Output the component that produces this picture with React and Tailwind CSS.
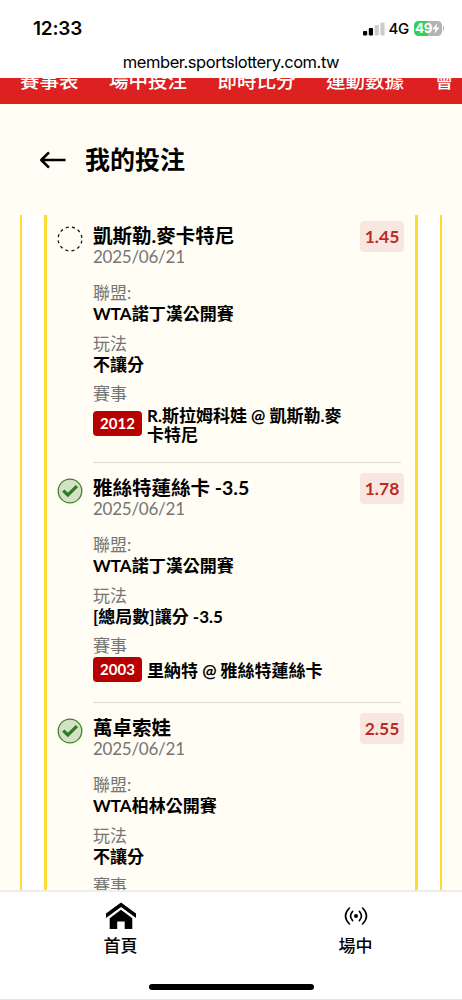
import React from 'react';

const navItems = ['賽事表', '場中投注', '即時比分', '運動數據', '會'];

const bets = [
  {
    id: 1,
    name: '凱斯勒.麥卡特尼',
    date: '2025/06/21',
    odds: '1.45',
    won: false,
    league: 'WTA諾丁漢公開賽',
    play: '不讓分',
    code: '2012',
    match: 'R.斯拉姆科娃 @ 凱斯勒.麥卡特尼',
  },
  {
    id: 2,
    name: '雅絲特蓮絲卡 -3.5',
    date: '2025/06/21',
    odds: '1.78',
    won: true,
    league: 'WTA諾丁漢公開賽',
    play: '[總局數]讓分 -3.5',
    code: '2003',
    match: '里納特 @ 雅絲特蓮絲卡',
  },
  {
    id: 3,
    name: '萬卓索娃',
    date: '2025/06/21',
    odds: '2.55',
    won: true,
    league: 'WTA柏林公開賽',
    play: '不讓分',
    code: '',
    match: '',
  },
];

function StatusBar() {
  return (
    <div className="flex h-[52px] shrink-0 items-center justify-between pl-[33px] pr-[18px] pt-[5px] font-['Inter',sans-serif]">
      <span className="text-[19px] font-semibold leading-6 tracking-[-0.2px]">12:33</span>
      <div className="flex items-center">
        <svg width="22" height="14" viewBox="0 0 22 14">
          <rect x="0" y="9" width="4.2" height="4.5" rx="1" fill="#000" />
          <rect x="5.8" y="6" width="4.2" height="7.5" rx="1" fill="#000" />
          <rect x="11.6" y="3" width="4.2" height="10.5" rx="1" fill="#ccc" />
          <rect x="17.4" y="0.5" width="4.2" height="13" rx="1" fill="#ccc" />
        </svg>
        <span className="ml-[4px] w-[20px] text-[15px] font-medium leading-5 tracking-[-0.3px]">4G</span>
        <div className="ml-[5px] flex h-[15px] w-[28px] items-center justify-center rounded-[4.5px] bg-[linear-gradient(90deg,#34d058_50%,#b3b3b3_50%)] text-[13.5px] font-bold leading-none text-white">
          <span className="tracking-[-0.4px]">49</span>
          <svg width="8" height="11" viewBox="0 0 7 10" fill="#fff">
            <path d="M4.6 0.2 0.3 5.7h2.6L2.2 9.8 6.7 4.2H4z" />
          </svg>
        </div>
        <div className="ml-px h-[5px] w-[1.5px] rounded-r bg-[#b3b3b3]" />
      </div>
    </div>
  );
}

function StatusIcon({ won }) {
  if (!won) {
    return (
      <svg width="26" height="26" viewBox="0 0 26 26" fill="none">
        <circle cx="13" cy="13" r="11.9" stroke="#1a1a1a" strokeWidth="1.3" strokeDasharray="3 3.23" strokeDashoffset="-1.6" />
      </svg>
    );
  }
  return (
    <svg width="26" height="26" viewBox="0 0 26 26" fill="none">
      <circle cx="13" cy="13" r="11.8" fill="#d5e0c9" stroke="#3c8529" strokeWidth="1.3" />
      <path d="m6.3 12.6 4.6 4.4 9-8.9" stroke="#2f7a1e" strokeWidth="3.2" />
    </svg>
  );
}

function Field({ label, value }) {
  return (
    <div className="mb-[9.5px] h-[41px]">
      <div className="h-5 text-[17px] leading-5 text-[#757575]">{label}</div>
      <div className="h-[21px] text-[17px] font-bold leading-[22px]">{value}</div>
    </div>
  );
}

function BetItem({ bet }) {
  return (
    <div className="flex pl-[10px] pr-[11px]">
      <div className="mt-[15px] w-[36px] shrink-0">
        <StatusIcon won={bet.won} />
      </div>
      <div className="w-[308px] shrink-0 border-b border-[#dedcd5] pb-[20px]">
        <div className="flex h-[72px] justify-between">
          <div className="pt-[14px]">
            <div className="h-[22px] whitespace-nowrap text-[19.5px] font-bold leading-[22px]">{bet.name}</div>
            <div className="h-5 text-[17px] leading-5 tracking-[-0.25px] text-[#757575]">{bet.date}</div>
          </div>
          <div className="-mr-[3px] mt-[10px] flex h-[31px] w-[44px] items-center justify-center rounded-[4px] bg-[#f8e7e0] pt-px text-[17.5px] font-bold text-[#bd2c23]">
            {bet.odds}
          </div>
        </div>
        <Field label="聯盟:" value={bet.league} />
        <Field label="玩法" value={bet.play} />
        <div className="h-[21px] text-[17px] leading-5 text-[#757575]">賽事</div>
        <div className="flex min-h-[25px] items-center">
          <div className="flex h-[25px] w-[49px] shrink-0 items-center justify-center rounded-[4px] bg-[#b90000] text-[15px] font-bold text-white">
            {bet.code}
          </div>
          <div className="-mb-[2px] ml-[5px] w-[202px] break-all pt-[2px] text-[17px] font-bold leading-[18.5px]">{bet.match}</div>
        </div>
      </div>
    </div>
  );
}

function BottomNav() {
  return (
    <nav className="flex h-[110px] shrink-0 flex-col border-b border-t-2 border-b-[#e5e5e5] border-t-[#ededed] bg-white">
      <div className="flex h-[92px] pl-[3px] text-[17px] font-medium">
        <div className="flex w-[235px] shrink-0 flex-col items-center pt-[10px]">
          <svg width="30" height="28" viewBox="0 0 30 28" fill="#000">
            <path d="M15 0.5 0 11.6v4.4L15 5l15 11v-4.4z" />
            <path d="M15 7.8 3.7 16.2V27h7.5v-7.6h7.5V27h7.6V16.2z" />
          </svg>
          <span className="mt-[4px] leading-6">首頁</span>
        </div>
        <div className="flex w-[235px] shrink-0 flex-col items-center pt-[10px]">
          <svg width="24" height="28" viewBox="0 0 24 28" fill="none" stroke="#000" strokeWidth="1.6" strokeLinecap="round">
            <circle cx="12" cy="14" r="2" fill="#000" stroke="none" />
            <path d="M8.6 9.4q-4.1 4.6 0 9.2M15.4 9.4q4.1 4.6 0 9.2" />
            <path d="M5.4 6q-7.8 8 0 16M18.6 6q7.8 8 0 16" />
          </svg>
          <span className="mt-[4px] leading-6">場中</span>
        </div>
      </div>
      <div className="mx-auto h-[6px] w-[165px] rounded-full bg-black" />
    </nav>
  );
}

export default function App() {
  return (
    <div className="flex h-[1000px] w-[462px] flex-col overflow-hidden bg-white font-['Lato','Noto_Sans_CJK_TC',sans-serif] text-black">
      <StatusBar />
      <div className="h-[26px] shrink-0 text-center font-['Inter',sans-serif] text-[16.5px] leading-5 tracking-[-0.45px]">
        member.sportslottery.com.tw
      </div>

      <header className="h-[26px] shrink-0 overflow-hidden bg-[#dd2020]">
        <div className="-mt-[9px] flex gap-[30.5px] whitespace-nowrap pl-[20px] text-[19.5px] font-medium leading-6 text-white">
          {navItems.map((item) => (
            <span key={item}>{item}</span>
          ))}
        </div>
      </header>

      <main className="flex min-h-0 flex-1 flex-col bg-[#fffdf4]">
        <div className="flex h-[111px] shrink-0 items-center pl-[39px]">
          <svg width="28" height="18" viewBox="0 0 28 18" fill="none" stroke="#000" strokeWidth="2.6">
            <path d="M26.5 9H2.5M10 1.3 2.3 9l7.7 7.7" strokeLinejoin="round" />
          </svg>
          <h1 className="-mt-[2px] ml-[18px] text-[25px] font-bold leading-8">我的投注</h1>
        </div>

        {/* ticket frame */}
        <div className="mx-[20px] min-h-0 flex-1 overflow-hidden border-x-2 border-[#ffda33] bg-white px-[22px]">
          <div className="h-full overflow-hidden border-x-[3px] border-[#ffda33] bg-[#fffdf4]">
            <div className="-mt-[4px]">
              {bets.map((bet) => (
                <BetItem key={bet.id} bet={bet} />
              ))}
            </div>
          </div>
        </div>
      </main>

      <BottomNav />
    </div>
  );
}
